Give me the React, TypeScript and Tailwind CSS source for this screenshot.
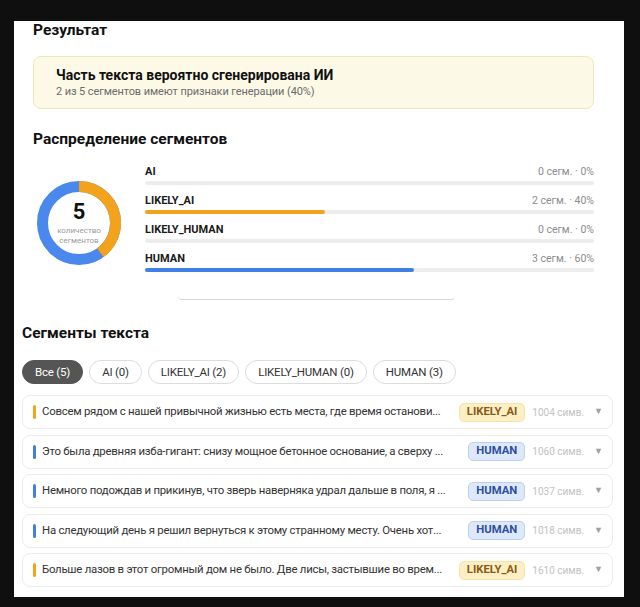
import React from "react";

type Kind = "AI" | "LIKELY_AI" | "LIKELY_HUMAN" | "HUMAN";

const dist: { label: Kind; count: number; pct: number; color: string }[] = [
  { label: "AI", count: 0, pct: 0, color: "bg-[#e5484d]" },
  { label: "LIKELY_AI", count: 2, pct: 40, color: "bg-[#f2a31b]" },
  { label: "LIKELY_HUMAN", count: 0, pct: 0, color: "bg-[#7aa7ee]" },
  { label: "HUMAN", count: 3, pct: 60, color: "bg-[#3f7fe6]" },
];

const filters = [
  { label: "Все (5)", active: true },
  { label: "AI (0)" },
  { label: "LIKELY_AI (2)" },
  { label: "LIKELY_HUMAN (0)" },
  { label: "HUMAN (3)" },
];

const segments: { text: string; kind: Kind; chars: number }[] = [
  {
    text: "Совсем рядом с нашей привычной жизнью есть места, где время останови...",
    kind: "LIKELY_AI",
    chars: 1004,
  },
  {
    text: "Это была древняя изба-гигант: снизу мощное бетонное основание, а сверху ...",
    kind: "HUMAN",
    chars: 1060,
  },
  {
    text: "Немного подождав и прикинув, что зверь наверняка удрал дальше в поля, я ...",
    kind: "HUMAN",
    chars: 1037,
  },
  {
    text: "На следующий день я решил вернуться к этому странному месту. Очень хот...",
    kind: "HUMAN",
    chars: 1018,
  },
  {
    text: "Больше лазов в этот огромный дом не было. Две лисы, застывшие во врем...",
    kind: "LIKELY_AI",
    chars: 1610,
  },
];

function Donut() {
  // 40% orange from 12 o'clock clockwise, the rest blue
  const r = 36.5;
  const c = 2 * Math.PI * r;
  const ai = c * 0.4;
  return (
    <div className="relative h-[84px] w-[84px] shrink-0">
      <svg width="84" height="84" viewBox="0 0 84 84" className="-rotate-90">
        <circle cx="42" cy="42" r={r} fill="none" stroke="#4a88ee" strokeWidth="11" />
        <circle
          cx="42"
          cy="42"
          r={r}
          fill="none"
          stroke="#f2a31b"
          strokeWidth="11"
          strokeDasharray={`${ai} ${c - ai}`}
        />
      </svg>
      <div className="absolute inset-0 flex flex-col items-center justify-center">
        <span className="text-[22px] font-bold leading-[22px] text-[#111]">5</span>
        <span className="mt-[3px] text-[8px] leading-[10px] text-[#9a9a9a]">количество</span>
        <span className="text-[8px] leading-[10px] text-[#9a9a9a]">сегментов</span>
      </div>
    </div>
  );
}

function Badge({ kind }: { kind: Kind }) {
  const ai = kind === "LIKELY_AI";
  return (
    <span
      className={
        ai
          ? "ml-[7px] flex h-[19px] shrink-0 items-center rounded-[5px] border border-[#f7e3a8] bg-[#fcefc5] px-[7px] text-[11.3px] font-bold text-[#8a5a12]"
          : "ml-[7px] flex h-[19px] shrink-0 items-center rounded-[5px] border border-[#b9cff3] bg-[#dde9fb] px-[7px] text-[11.3px] font-bold text-[#2d4f9c]"
      }
    >
      {kind}
    </span>
  );
}

export default function App() {
  return (
    <div
      className="min-h-[607px] w-[640px] bg-[#0f0f0f] pt-[21px] pb-[10px] pl-[14px] pr-[16px]"
      style={{ fontFamily: 'Roboto, "Open Sans", sans-serif' }}
    >
      <div className="h-[576px] overflow-hidden bg-white pl-[8px] pr-[11px]">
        {/* result summary */}
        <div className="pl-[11px] pr-[19px]">
          <h2 className="text-[15.5px] font-bold leading-[18px] text-[#111]">Результат</h2>
          <div className="mt-[17px] rounded-[8px] border border-[#f1e7b6] bg-[#fdf9e7] px-[22px] pt-[10px] pb-[9px]">
            <div className="text-[14px] font-bold leading-[16px] text-[#111]">
              Часть текста вероятно сгенерирована ИИ
            </div>
            <div className="mt-[2px] text-[11px] tracking-[-0.1px] leading-[14px] text-[#6b6b6b]">
              2 из 5 сегментов имеют признаки генерации (40%)
            </div>
          </div>

          <h2 className="mt-[20px] text-[15.5px] font-bold leading-[20px] text-[#111]">
            Распределение сегментов
          </h2>
          <div className="mt-[15px] flex items-start gap-[24px] pl-[4px]">
            <div className="mt-[17px]">
              <Donut />
            </div>
            <div className="flex flex-1 flex-col gap-[8px]">
              {dist.map((d) => (
                <div key={d.label}>
                  <div className="flex items-center justify-between leading-[16px]">
                    <span className="text-[11px] font-bold text-[#1a1a1a]">{d.label}</span>
                    <span className="text-[10.5px] text-[#8c8c8c]">
                      {d.count} сегм. · {d.pct}%
                    </span>
                  </div>
                  <div className="mt-[1px] h-[4px] rounded-full bg-[#ededed]">
                    <div
                      className={`h-full rounded-full ${d.color}`}
                      style={{ width: `${d.pct}%` }}
                    />
                  </div>
                </div>
              ))}
            </div>
          </div>
          <div className="ml-[145px] mt-[24px] h-[4px] w-[277px] rounded-b-[4px] border-b border-[#d6d6d6]" />
        </div>

        {/* segments list */}
        <h2 className="mt-[23px] text-[15.5px] font-bold leading-[20px] text-[#111]">
          Сегменты текста
        </h2>
        <div className="mt-[17px] flex gap-[6px]">
          {filters.map((f) => (
            <span
              key={f.label}
              className={
                f.active
                  ? "rounded-full border border-[#555] bg-[#555] px-[12px] text-[11.5px] tracking-[-0.2px] leading-[22px] text-white"
                  : "rounded-full border border-[#dcdcdc] bg-white px-[12px] text-[11.5px] tracking-[-0.2px] leading-[22px] text-[#333]"
              }
            >
              {f.label}
            </span>
          ))}
        </div>
        <div className="mt-[11px] flex flex-col gap-[5.5px]">
          {segments.map((s, i) => (
            <div
              key={i}
              className="flex h-[34px] items-center rounded-[8px] border border-[#ececec] bg-white pl-[10px] pr-[9px]"
            >
              <span
                className={`h-[14px] w-[3px] shrink-0 rounded-full ${
                  s.kind === "HUMAN" ? "bg-[#3f7fe6]" : "bg-[#f2a31b]"
                }`}
              />
              <span className="ml-[6px] min-w-0 flex-1 truncate text-[11.4px] tracking-[-0.25px] text-[#333]">
                {s.text}
              </span>
              <Badge kind={s.kind} />
              <span className="ml-[7px] shrink-0 whitespace-nowrap text-[10px] text-[#c2c2c2]">
                {s.chars} симв.
              </span>
              <span className="ml-[10px] text-[9px] text-[#a0a0a0]">▼</span>
            </div>
          ))}
        </div>
      </div>
    </div>
  );
}
